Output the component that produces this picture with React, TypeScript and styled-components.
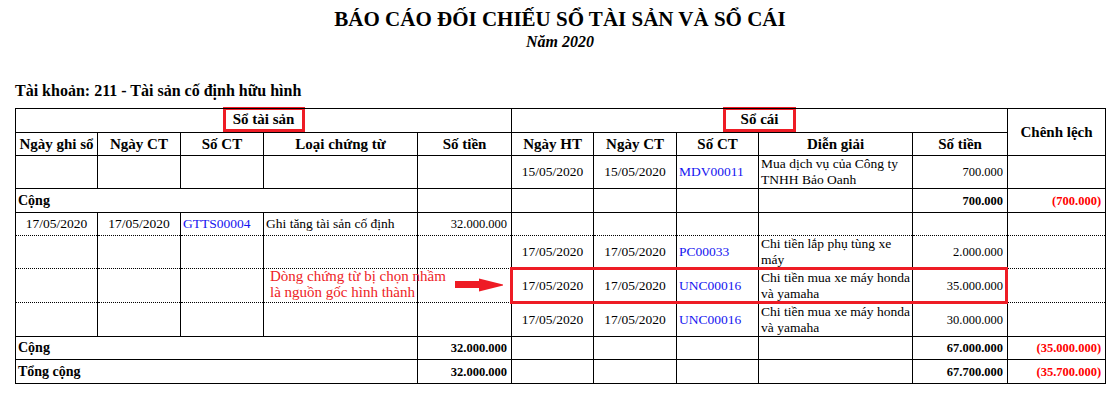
import styled, { createGlobalStyle } from "styled-components";

const GlobalStyle = createGlobalStyle`
  body {
    margin: 0;
    background: #ffffff;
    color: #000000;
    font-family: "Liberation Serif", "Times New Roman", serif;
  }
`;

// độ rộng các cột (px), tính từ ảnh gốc
const colWidths = [82, 83, 83, 154, 94, 82, 83, 82, 154, 95, 98];

function Empty({ n }: { n: number }) {
    return (
        <>
            {Array.from({ length: n }).map((_, i) => (
                <Cell key={i} />
            ))}
        </>
    );
}

function App() {
    return (
        <>
            <GlobalStyle />
            <Page>
                <Title>BÁO CÁO ĐỐI CHIẾU SỔ TÀI SẢN VÀ SỔ CÁI</Title>
                <Subtitle>Năm 2020</Subtitle>
                <Account>Tài khoản: 211 - Tài sản cố định hữu hình</Account>

                <TableWrap>
                    <Table>
                        <colgroup>
                            {colWidths.map((w, i) => (
                                <Col key={i} $w={w} />
                            ))}
                        </colgroup>
                        <thead>
                            <Row $h={24}>
                                <Head colSpan={5}>
                                    <Label $w={82}>Sổ tài sản</Label>
                                </Head>
                                <Head colSpan={5}>
                                    <Label $w={73}>Sổ cái</Label>
                                </Head>
                                <Head rowSpan={2}>Chênh lệch</Head>
                            </Row>
                            <Row $h={23}>
                                <Head>Ngày ghi sổ</Head>
                                <Head>Ngày CT</Head>
                                <Head>Số CT</Head>
                                <Head>Loại chứng từ</Head>
                                <Head>Số tiền</Head>
                                <Head>Ngày HT</Head>
                                <Head>Ngày CT</Head>
                                <Head>Số CT</Head>
                                <Head>Diễn giải</Head>
                                <Head>Số tiền</Head>
                            </Row>
                        </thead>
                        <tbody>
                            {/* Sổ cái - dòng MDV */}
                            <Row $h={33}>
                                <Empty n={5} />
                                <Cell $align="center">15/05/2020</Cell>
                                <Cell $align="center">15/05/2020</Cell>
                                <Cell $tone="blue">MDV00011</Cell>
                                <Cell>Mua dịch vụ của Công ty TNHH Bảo Oanh</Cell>
                                <Cell $align="right" $num>700.000</Cell>
                                <Cell />
                            </Row>
                            <Row $h={24}>
                                <Cell colSpan={4} $bold>Cộng</Cell>
                                <Empty n={5} />
                                <Cell $align="right" $num $bold>700.000</Cell>
                                <Cell $align="right" $num $bold $tone="red">(700.000)</Cell>
                            </Row>

                            {/* dòng GTTS và các chứng từ chi */}
                            <Row $h={23} $dotted>
                                <Cell $align="center">17/05/2020</Cell>
                                <Cell $align="center">17/05/2020</Cell>
                                <Cell $tone="blue">GTTS00004</Cell>
                                <Cell>Ghi tăng tài sản cố định</Cell>
                                <Cell $align="right" $num>32.000.000</Cell>
                                <Empty n={6} />
                            </Row>
                            <Row $h={33} $dotted>
                                <Empty n={5} />
                                <Cell $align="center">17/05/2020</Cell>
                                <Cell $align="center">17/05/2020</Cell>
                                <Cell $tone="blue">PC00033</Cell>
                                <Cell>Chi tiền lắp phụ tùng xe máy</Cell>
                                <Cell $align="right" $num>2.000.000</Cell>
                                <Cell />
                            </Row>
                            <Row $h={34} $dotted>
                                <Empty n={5} />
                                <Cell $align="center">17/05/2020</Cell>
                                <Cell $align="center">17/05/2020</Cell>
                                <Cell $tone="blue">UNC00016</Cell>
                                <Cell>Chi tiền mua xe máy honda và yamaha</Cell>
                                <Cell $align="right" $num>35.000.000</Cell>
                                <Cell />
                            </Row>
                            <Row $h={34}>
                                <Empty n={5} />
                                <Cell $align="center">17/05/2020</Cell>
                                <Cell $align="center">17/05/2020</Cell>
                                <Cell $tone="blue">UNC00016</Cell>
                                <Cell>Chi tiền mua xe máy honda và yamaha</Cell>
                                <Cell $align="right" $num>30.000.000</Cell>
                                <Cell />
                            </Row>

                            <Row $h={23}>
                                <Cell colSpan={4} $bold>Cộng</Cell>
                                <Cell $align="right" $num $bold>32.000.000</Cell>
                                <Empty n={4} />
                                <Cell $align="right" $num $bold>67.000.000</Cell>
                                <Cell $align="right" $num $bold $tone="red">(35.000.000)</Cell>
                            </Row>
                            <Row $h={24}>
                                <Cell colSpan={4} $bold>Tổng cộng</Cell>
                                <Cell $align="right" $num $bold>32.000.000</Cell>
                                <Empty n={4} />
                                <Cell $align="right" $num $bold>67.700.000</Cell>
                                <Cell $align="right" $num $bold $tone="red">(35.700.000)</Cell>
                            </Row>
                        </tbody>
                    </Table>

                    {/* chú thích: khung đỏ + mũi tên */}
                    <Highlight />
                    <Note>
                        Dòng chứng từ bị chọn nhầm
                        <br />
                        là nguồn gốc hình thành
                    </Note>
                    <Arrow width="48" height="14" viewBox="0 0 48 14">
                        <polygon points="0,3 24,3 24,0.5 48,6.5 48,7.5 24,13.5 24,10 0,10" fill="#ee1c25" />
                    </Arrow>
                </TableWrap>
            </Page>
        </>
    );
}

export default App;

// --- Styled Components ---

const Page = styled.div`
    width: 1120px;
    padding-top: 7px;
`;

const Title = styled.h1`
    margin: 0;
    text-align: center;
    font-size: 21px;
    line-height: 24px;
    font-weight: 700;
`;

const Subtitle = styled.div`
    margin-top: 1px;
    text-align: center;
    font-size: 16px;
    line-height: 20px;
    font-weight: 700;
    font-style: italic;
`;

const Account = styled.div`
    margin-top: 29px;
    padding-left: 15px;
    font-size: 16px;
    line-height: 20px;
    font-weight: 700;
`;

const TableWrap = styled.div`
    position: relative;
    margin: 7px 0 0 15px;
    width: 1091px;
`;

const Table = styled.table`
    border-collapse: collapse;
    table-layout: fixed;
    width: 1091px;
    border: 1px solid #000;
`;

const Col = styled.col<{ $w: number }>`
    width: ${({ $w }) => $w}px;
`;

const Row = styled.tr<{ $h: number; $dotted?: boolean }>`
    height: ${({ $h }) => $h}px;

    & > td {
        border-bottom: 1px ${({ $dotted }) => ($dotted ? "dotted" : "solid")} #000;
    }
`;

const Head = styled.th`
    border: 1px solid #000;
    padding: 0;
    font-size: 15px;
    font-weight: 700;
    text-align: center;
    vertical-align: middle;
    white-space: nowrap;
`;

const Label = styled.span<{ $w: number }>`
    display: block;
    box-sizing: border-box;
    width: ${({ $w }) => $w}px;
    height: 25px;
    margin: -2px auto 0;
    border: 3px solid #ee1c25;
    line-height: 19px;
`;

const Cell = styled.td<{
    $align?: "left" | "center" | "right";
    $bold?: boolean;
    $num?: boolean;
    $tone?: "blue" | "red";
}>`
    border-left: 1px solid #000;
    border-right: 1px solid #000;
    border-top: none;
    padding: 0 ${({ $align }) => ($align === "right" ? "4px" : "2px")};
    font-size: ${({ $num, $bold }) => ($num ? "12.5px" : $bold ? "14px" : "13.5px")};
    line-height: 16px;
    font-weight: ${({ $bold }) => ($bold ? 700 : 400)};
    text-align: ${({ $align }) => $align ?? "left"};
    vertical-align: middle;
    color: ${({ $tone }) => ($tone === "blue" ? "#1414f0" : $tone === "red" ? "#ff0000" : "#000")};
    overflow: hidden;
`;

const Highlight = styled.div`
    position: absolute;
    left: 495px;
    top: 159px;
    width: 498px;
    height: 37px;
    box-sizing: border-box;
    border: 3px solid #ee1c25;
    pointer-events: none;
`;

const Note = styled.div`
    position: absolute;
    left: 255px;
    top: 160px;
    font-size: 15px;
    line-height: 16px;
    color: #ee1c25;
    white-space: nowrap;
`;

const Arrow = styled.svg`
    position: absolute;
    left: 440px;
    top: 170px;
`;
